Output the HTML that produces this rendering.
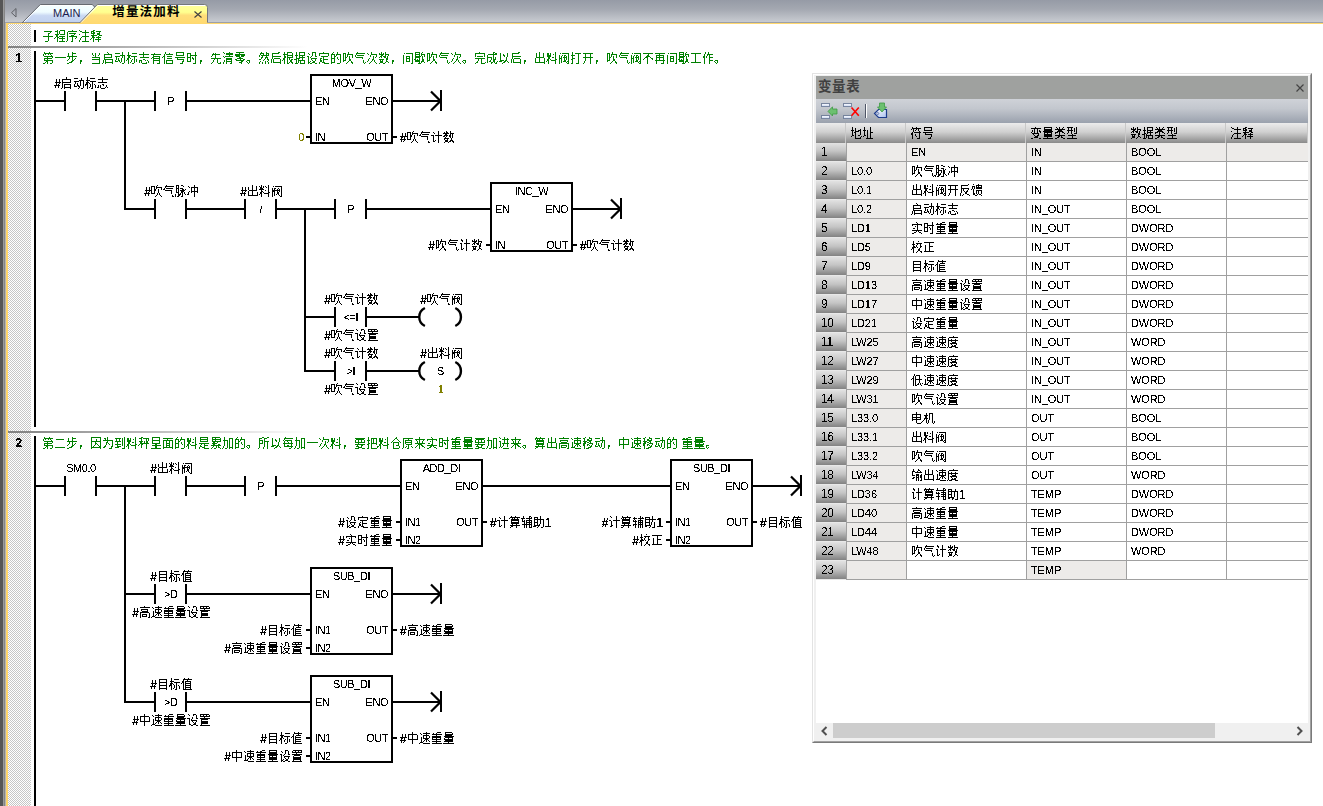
<!DOCTYPE html>
<html lang="zh-CN"><head><meta charset="utf-8"><title>增量法加料</title>
<style>
html,body{margin:0;padding:0;background:#fff;}
body{width:1323px;height:806px;overflow:hidden;position:relative;font-family:"Liberation Sans","Noto Sans CJK SC",sans-serif;font-size:12px;}
.abs{position:absolute;}
#strip{left:0;top:0;width:6px;height:806px;background:linear-gradient(90deg,#565656 0,#565656 3px,#9a9a9a 3px,#9a9a9a 4px,#858585 4px,#858585 5px,#b4b4b4 5px,#b4b4b4 6px);}
#tabbar{left:5px;top:0;width:1318px;height:23px;background:linear-gradient(180deg,#969ba6 0,#a4a8b1 40%,#c8cbd1 95%,#9da0a8 96%,#9da0a8 100%);}
#yl{left:6px;top:23px;width:1317px;height:1px;background:#ffd86e;}
#yv{left:6px;top:23px;width:2px;height:783px;background:#ffd66b;}
#gut{left:8px;top:24px;width:23px;height:782px;background-color:#fff;background-image:conic-gradient(#fff 25%,#c6c6c6 0 50%,#fff 0 75%,#c6c6c6 0);background-size:2px 2px;}
.sep{left:8px;height:2px;width:300px;background:linear-gradient(90deg,#808080 0,#ffffff 100%);}
svg text.c{font-family:"Liberation Sans","Noto Sans CJK SC",sans-serif;font-size:12px;font-weight:300;}
svg text.l{font-family:"Liberation Sans","Noto Sans CJK SC",sans-serif;font-size:11px;letter-spacing:-0.45px;}
svg text.nb{font-family:"Liberation Sans","Noto Sans CJK SC",sans-serif;font-size:12px;font-weight:bold;}
svg rect{shape-rendering:crispEdges;}
/* tabs */
#tabs{left:0;top:0;}
.tabtxt{position:absolute;white-space:nowrap;}
/* panel */
#panel{left:812px;top:73px;width:500px;height:670px;background:#f0f0f0;box-sizing:border-box;border-style:solid;border-width:1px;border-color:#e3e3e3 #7a7a7a #7a7a7a #e3e3e3;}
#panel .in{position:absolute;left:0;top:0;width:496px;height:666px;border-style:solid;border-width:1px;border-color:#fff #a0a0a0 #a0a0a0 #fff;}
#pc{left:816px;top:76px;width:492px;height:662px;background:#fff;overflow:hidden;}
#ttl{left:0;top:0;width:492px;height:23px;background:#9fa19f;}
#ttl span{position:absolute;left:2px;top:3px;font-weight:bold;font-size:13.5px;letter-spacing:0.6px;color:#404040;line-height:16px;}
#tool{left:0;top:23px;width:492px;height:24px;background:linear-gradient(180deg,#cfd2d8 0,#c3c7ce 40%,#9aa1ad 100%);}
.th{position:absolute;top:47px;height:20px;box-sizing:border-box;background:linear-gradient(180deg,#ececec 0,#d0d0d0 45%,#8a8a8a 100%);border-right:1px solid #c8c8c8;}

.rh{position:absolute;left:0;width:30px;height:18px;background:linear-gradient(180deg,#e2e2e2 0,#c4c4c4 45%,#828282 100%);border-bottom:1px solid #e8e8e8;}

.td{position:absolute;height:19px;box-sizing:border-box;background:#fff;border-left:1px solid #a0a0a0;border-bottom:1px solid #a0a0a0;}
.td.g{background:#edebe9;}
.td.last{border-right:0;}
.tx{position:absolute;left:0;top:0;width:492px;height:640px;}
.tx span{position:absolute;white-space:nowrap;color:#000;line-height:16px;}
.tx span.z{font-size:12px;font-weight:300;}
.tx span.a{font-size:11px;letter-spacing:-0.1px;}
.tx span.n{font-size:12px;letter-spacing:-0.4px;line-height:15px;}
#fz{filter:url(#th3);}
#fl{filter:url(#th4);}
#sb{left:0;top:647px;width:492px;height:15px;background:#f0f0f0;}
#thumb{left:17px;top:0;width:382px;height:15px;background:#cdcdcd;}
</style></head><body>
<div id="strip" class="abs"></div>
<div id="tabbar" class="abs"></div>
<div id="yl" class="abs"></div>
<div id="yv" class="abs"></div>
<div id="gut" class="abs"></div>
<div class="abs sep" style="top:46px"></div>
<div class="abs sep" style="top:431px"></div>
<svg class="abs" style="left:0;top:0" width="260" height="26" viewBox="0 0 260 26">
<defs>
<linearGradient id="gm" x1="0" y1="0" x2="0" y2="1"><stop offset="0" stop-color="#f6ffff"/><stop offset="0.42" stop-color="#effcff"/><stop offset="0.62" stop-color="#c9d8f3"/><stop offset="1" stop-color="#c2d2ef"/></linearGradient>
<linearGradient id="ga" x1="0" y1="0" x2="0" y2="1"><stop offset="0" stop-color="#ffff9e"/><stop offset="0.40" stop-color="#ffff8e"/><stop offset="0.55" stop-color="#ffde7a"/><stop offset="1" stop-color="#ffd96f"/></linearGradient>
</defs>
<path d="M22.5 22.5 L40.5 4.5 L92 4.5 L95.5 8 L81 22.5 Z" fill="url(#gm)"/>
<path d="M23.5 22.5 L41 5.5 L91.5 5.5" fill="none" stroke="#fff" stroke-width="1"/>
<path d="M22 23 L40.3 4.5 L92.2 4.5 L95 7.3" fill="none" stroke="#666a70" stroke-width="1"/>
<rect x="23" y="22" width="57" height="1" fill="#8b8e95"/>
<path d="M79 24 L97.3 4.5 L204.5 4.5 Q207.5 4.5 207.5 7.5 L207.5 24 Z" fill="url(#ga)"/>
<path d="M81 22.5 L98 5.5 L206 5.5" fill="none" stroke="#fff" stroke-width="1"/>
<path d="M79.5 23 L97.3 4.5 L204.5 4.5 Q207.5 4.5 207.5 7.5 L207.5 22.5" fill="none" stroke="#74777d" stroke-width="1"/>
<path d="M16 8.5 L11.5 12.7 L16 17 Z" fill="none" stroke="#5f6166" stroke-width="1"/>
<path d="M194.5 11.5 L201.5 17.5 M201.5 11.5 L194.5 17.5" fill="none" stroke="#404040" stroke-width="1.15"/>
<text x="53" y="17" style="font-family:'Liberation Sans','Noto Sans CJK SC',sans-serif;font-size:11px" fill="#1c1c4e">MAIN</text>
<text x="112.3" y="16.4" style="font-family:'Liberation Sans','Noto Sans CJK SC',sans-serif;font-size:12.5px;font-weight:bold;letter-spacing:1.15px" fill="#000">增量法加料</text>
</svg>
<svg class="abs" style="left:0;top:0" width="1323" height="806" viewBox="0 0 1323 806">
<defs>
<filter id="th3" x="0" y="0" width="100%" height="100%" color-interpolation-filters="sRGB"><feComponentTransfer><feFuncA type="discrete" tableValues="0 0 0 1 1 1 1 1 1 1"/></feComponentTransfer></filter>
<filter id="th4" x="0" y="0" width="100%" height="100%" color-interpolation-filters="sRGB"><feComponentTransfer><feFuncA type="discrete" tableValues="0 0 0 0 0 0 0 0 0 1 1 1 1 1 1 1 1 1 1 1"/></feComponentTransfer></filter>
</defs>
<g>
<rect x="34" y="30" width="2" height="12" fill="#000"/>
<rect x="34" y="51" width="2" height="376" fill="#000"/>
<rect x="34" y="436" width="2" height="370" fill="#000"/>
<rect x="36" y="100" width="28" height="2" fill="#000"/>
<rect x="64" y="91" width="2" height="20" fill="#000"/>
<rect x="95" y="91" width="2" height="20" fill="#000"/>
<rect x="97" y="100" width="57" height="2" fill="#000"/>
<rect x="154" y="91" width="2" height="20" fill="#000"/>
<rect x="185" y="91" width="2" height="20" fill="#000"/>
<rect x="187" y="100" width="123" height="2" fill="#000"/>
<rect x="311" y="75" width="81" height="68" fill="#fff" stroke="#000" stroke-width="2"/>
<rect x="306" y="136" width="4" height="2" fill="#000"/>
<rect x="393" y="136" width="4" height="2" fill="#000"/>
<rect x="393" y="100" width="47" height="2" fill="#000"/>
<rect x="440" y="90" width="2" height="21" fill="#000"/>
<path d="M431 91.5 L440.5 101 L431 110.5" fill="none" stroke="#000" stroke-width="2.2" class="aa"/>
<rect x="124" y="100" width="2" height="110" fill="#000"/>
<rect x="124" y="208" width="30" height="2" fill="#000"/>
<rect x="154" y="199" width="2" height="20" fill="#000"/>
<rect x="185" y="199" width="2" height="20" fill="#000"/>
<rect x="187" y="208" width="57" height="2" fill="#000"/>
<rect x="244" y="199" width="2" height="20" fill="#000"/>
<rect x="275" y="199" width="2" height="20" fill="#000"/>
<rect x="277" y="208" width="57" height="2" fill="#000"/>
<rect x="334" y="199" width="2" height="20" fill="#000"/>
<rect x="365" y="199" width="2" height="20" fill="#000"/>
<rect x="367" y="208" width="123" height="2" fill="#000"/>
<rect x="491" y="183" width="81" height="68" fill="#fff" stroke="#000" stroke-width="2"/>
<rect x="486" y="244" width="4" height="2" fill="#000"/>
<rect x="573" y="244" width="4" height="2" fill="#000"/>
<rect x="573" y="208" width="47" height="2" fill="#000"/>
<rect x="620" y="198" width="2" height="21" fill="#000"/>
<path d="M611 199.5 L620.5 209 L611 218.5" fill="none" stroke="#000" stroke-width="2.2" class="aa"/>
<rect x="304" y="208" width="2" height="164" fill="#000"/>
<rect x="304" y="316" width="30" height="2" fill="#000"/>
<rect x="334" y="307" width="2" height="20" fill="#000"/>
<rect x="365" y="307" width="2" height="20" fill="#000"/>
<rect x="367" y="316" width="52" height="2" fill="#000"/>
<path d="M424.9 308 A10 10 0 0 0 424.9 326" fill="none" stroke="#000" stroke-width="2.4" class="aa"/>
<path d="M455.3 308 A10 10 0 0 1 455.3 326" fill="none" stroke="#000" stroke-width="2.4" class="aa"/>
<rect x="304" y="370" width="30" height="2" fill="#000"/>
<rect x="334" y="361" width="2" height="20" fill="#000"/>
<rect x="365" y="361" width="2" height="20" fill="#000"/>
<rect x="367" y="370" width="52" height="2" fill="#000"/>
<path d="M424.9 362 A10 10 0 0 0 424.9 380" fill="none" stroke="#000" stroke-width="2.4" class="aa"/>
<path d="M455.3 362 A10 10 0 0 1 455.3 380" fill="none" stroke="#000" stroke-width="2.4" class="aa"/>
<rect x="36" y="485" width="28" height="2" fill="#000"/>
<rect x="64" y="476" width="2" height="20" fill="#000"/>
<rect x="95" y="476" width="2" height="20" fill="#000"/>
<rect x="97" y="485" width="57" height="2" fill="#000"/>
<rect x="154" y="476" width="2" height="20" fill="#000"/>
<rect x="185" y="476" width="2" height="20" fill="#000"/>
<rect x="187" y="485" width="57" height="2" fill="#000"/>
<rect x="244" y="476" width="2" height="20" fill="#000"/>
<rect x="275" y="476" width="2" height="20" fill="#000"/>
<rect x="277" y="485" width="123" height="2" fill="#000"/>
<rect x="401" y="460" width="81" height="86" fill="#fff" stroke="#000" stroke-width="2"/>
<rect x="396" y="521" width="4" height="2" fill="#000"/>
<rect x="396" y="539" width="4" height="2" fill="#000"/>
<rect x="483" y="521" width="4" height="2" fill="#000"/>
<rect x="483" y="485" width="187" height="2" fill="#000"/>
<rect x="671" y="460" width="81" height="86" fill="#fff" stroke="#000" stroke-width="2"/>
<rect x="666" y="521" width="4" height="2" fill="#000"/>
<rect x="666" y="539" width="4" height="2" fill="#000"/>
<rect x="753" y="521" width="4" height="2" fill="#000"/>
<rect x="753" y="485" width="47" height="2" fill="#000"/>
<rect x="800" y="475" width="2" height="21" fill="#000"/>
<path d="M791 476.5 L800.5 486 L791 495.5" fill="none" stroke="#000" stroke-width="2.2" class="aa"/>
<rect x="124" y="485" width="2" height="218" fill="#000"/>
<rect x="124" y="593" width="30" height="2" fill="#000"/>
<rect x="154" y="584" width="2" height="20" fill="#000"/>
<rect x="185" y="584" width="2" height="20" fill="#000"/>
<rect x="187" y="593" width="123" height="2" fill="#000"/>
<rect x="311" y="568" width="81" height="86" fill="#fff" stroke="#000" stroke-width="2"/>
<rect x="306" y="629" width="4" height="2" fill="#000"/>
<rect x="306" y="647" width="4" height="2" fill="#000"/>
<rect x="393" y="629" width="4" height="2" fill="#000"/>
<rect x="393" y="593" width="47" height="2" fill="#000"/>
<rect x="440" y="583" width="2" height="21" fill="#000"/>
<path d="M431 584.5 L440.5 594 L431 603.5" fill="none" stroke="#000" stroke-width="2.2" class="aa"/>
<rect x="124" y="701" width="30" height="2" fill="#000"/>
<rect x="154" y="692" width="2" height="20" fill="#000"/>
<rect x="185" y="692" width="2" height="20" fill="#000"/>
<rect x="187" y="701" width="123" height="2" fill="#000"/>
<rect x="311" y="676" width="81" height="86" fill="#fff" stroke="#000" stroke-width="2"/>
<rect x="306" y="737" width="4" height="2" fill="#000"/>
<rect x="306" y="755" width="4" height="2" fill="#000"/>
<rect x="393" y="737" width="4" height="2" fill="#000"/>
<rect x="393" y="701" width="47" height="2" fill="#000"/>
<rect x="440" y="691" width="2" height="21" fill="#000"/>
<path d="M431 692.5 L440.5 702 L431 711.5" fill="none" stroke="#000" stroke-width="2.2" class="aa"/>
</g>
<g filter="url(#th3)">
<text class="c" x="81.5" y="88.2" text-anchor="middle" fill="#000">#启动标志</text>
<text class="c" x="400" y="142.2" text-anchor="start" fill="#000">#吹气计数</text>
<text class="c" x="171.5" y="196.2" text-anchor="middle" fill="#000">#吹气脉冲</text>
<text class="c" x="261.5" y="196.2" text-anchor="middle" fill="#000">#出料阀</text>
<text class="c" x="483" y="250.2" text-anchor="end" fill="#000">#吹气计数</text>
<text class="c" x="580" y="250.2" text-anchor="start" fill="#000">#吹气计数</text>
<text class="c" x="351.5" y="304.2" text-anchor="middle" fill="#000">#吹气计数</text>
<text class="c" x="351.5" y="340.2" text-anchor="middle" fill="#000">#吹气设置</text>
<text class="c" x="441.5" y="304.2" text-anchor="middle" fill="#000">#吹气阀</text>
<text class="c" x="351.5" y="358.2" text-anchor="middle" fill="#000">#吹气计数</text>
<text class="c" x="351.5" y="394.2" text-anchor="middle" fill="#000">#吹气设置</text>
<text class="c" x="441.5" y="358.2" text-anchor="middle" fill="#000">#出料阀</text>
<text class="c" x="171.5" y="473.2" text-anchor="middle" fill="#000">#出料阀</text>
<text class="c" x="393" y="527.2" text-anchor="end" fill="#000">#设定重量</text>
<text class="c" x="393" y="545.2" text-anchor="end" fill="#000">#实时重量</text>
<text class="c" x="490" y="527.2" text-anchor="start" fill="#000">#计算辅助1</text>
<text class="c" x="663" y="527.2" text-anchor="end" fill="#000">#计算辅助1</text>
<text class="c" x="663" y="545.2" text-anchor="end" fill="#000">#校正</text>
<text class="c" x="760" y="527.2" text-anchor="start" fill="#000">#目标值</text>
<text class="c" x="171.5" y="581.2" text-anchor="middle" fill="#000">#目标值</text>
<text class="c" x="171.5" y="617.2" text-anchor="middle" fill="#000">#高速重量设置</text>
<text class="c" x="303" y="635.2" text-anchor="end" fill="#000">#目标值</text>
<text class="c" x="303" y="653.2" text-anchor="end" fill="#000">#高速重量设置</text>
<text class="c" x="400" y="635.2" text-anchor="start" fill="#000">#高速重量</text>
<text class="c" x="171.5" y="689.2" text-anchor="middle" fill="#000">#目标值</text>
<text class="c" x="171.5" y="725.2" text-anchor="middle" fill="#000">#中速重量设置</text>
<text class="c" x="303" y="743.2" text-anchor="end" fill="#000">#目标值</text>
<text class="c" x="303" y="761.2" text-anchor="end" fill="#000">#中速重量设置</text>
<text class="c" x="400" y="743.2" text-anchor="start" fill="#000">#中速重量</text>
<text class="c" x="42" y="41.2" text-anchor="start" fill="#008000">子程序注释</text>
<text class="c" x="42" y="63.2" text-anchor="start" fill="#008000">第一步，当启动标志有信号时，先清零。然后根据设定的吹气次数，间歇吹气次。完成以后，出料阀打开，吹气阀不再间歇工作。</text>
<text class="c" x="42" y="448.2" text-anchor="start" fill="#008000">第二步，因为到料秤里面的料是累加的。所以每加一次料，要把料仓原来实时重量要加进来。算出高速移动，中速移动的 重量。</text>
</g>
<g filter="url(#th4)">
<text class="l" x="170.8" y="105" text-anchor="middle" fill="#000">P</text>
<text class="l" x="351.5" y="87" text-anchor="middle" fill="#000">MOV_W</text>
<text class="l" x="315" y="105" text-anchor="start" fill="#000">EN</text>
<text class="l" x="388" y="105" text-anchor="end" fill="#000">ENO</text>
<text class="l" x="315" y="141" text-anchor="start" fill="#000">IN</text>
<text class="l" x="304" y="141" text-anchor="end" fill="#808000">0</text>
<text class="l" x="388" y="141" text-anchor="end" fill="#000">OUT</text>
<text class="l" x="260.8" y="213" text-anchor="middle" fill="#000">/</text>
<text class="l" x="350.8" y="213" text-anchor="middle" fill="#000">P</text>
<text class="l" x="531.5" y="195" text-anchor="middle" fill="#000">INC_W</text>
<text class="l" x="495" y="213" text-anchor="start" fill="#000">EN</text>
<text class="l" x="568" y="213" text-anchor="end" fill="#000">ENO</text>
<text class="l" x="495" y="249" text-anchor="start" fill="#000">IN</text>
<text class="l" x="568" y="249" text-anchor="end" fill="#000">OUT</text>
<text class="l" x="350.8" y="321" text-anchor="middle" fill="#000">&lt;=I</text>
<text class="l" x="350.8" y="375" text-anchor="middle" fill="#000">&gt;I</text>
<text class="l" x="440.5" y="375" text-anchor="middle" fill="#000">S</text>
<text class="l" x="440.5" y="393" text-anchor="middle" fill="#808000">1</text>
<text class="l" x="81.0" y="472" text-anchor="middle" fill="#000">SM0.0</text>
<text class="l" x="260.8" y="490" text-anchor="middle" fill="#000">P</text>
<text class="l" x="441.5" y="472" text-anchor="middle" fill="#000">ADD_DI</text>
<text class="l" x="405" y="490" text-anchor="start" fill="#000">EN</text>
<text class="l" x="478" y="490" text-anchor="end" fill="#000">ENO</text>
<text class="l" x="405" y="526" text-anchor="start" fill="#000">IN1</text>
<text class="l" x="405" y="544" text-anchor="start" fill="#000">IN2</text>
<text class="l" x="478" y="526" text-anchor="end" fill="#000">OUT</text>
<text class="l" x="711.5" y="472" text-anchor="middle" fill="#000">SUB_DI</text>
<text class="l" x="675" y="490" text-anchor="start" fill="#000">EN</text>
<text class="l" x="748" y="490" text-anchor="end" fill="#000">ENO</text>
<text class="l" x="675" y="526" text-anchor="start" fill="#000">IN1</text>
<text class="l" x="675" y="544" text-anchor="start" fill="#000">IN2</text>
<text class="l" x="748" y="526" text-anchor="end" fill="#000">OUT</text>
<text class="l" x="170.8" y="598" text-anchor="middle" fill="#000">&gt;D</text>
<text class="l" x="351.5" y="580" text-anchor="middle" fill="#000">SUB_DI</text>
<text class="l" x="315" y="598" text-anchor="start" fill="#000">EN</text>
<text class="l" x="388" y="598" text-anchor="end" fill="#000">ENO</text>
<text class="l" x="315" y="634" text-anchor="start" fill="#000">IN1</text>
<text class="l" x="315" y="652" text-anchor="start" fill="#000">IN2</text>
<text class="l" x="388" y="634" text-anchor="end" fill="#000">OUT</text>
<text class="l" x="170.8" y="706" text-anchor="middle" fill="#000">&gt;D</text>
<text class="l" x="351.5" y="688" text-anchor="middle" fill="#000">SUB_DI</text>
<text class="l" x="315" y="706" text-anchor="start" fill="#000">EN</text>
<text class="l" x="388" y="706" text-anchor="end" fill="#000">ENO</text>
<text class="l" x="315" y="742" text-anchor="start" fill="#000">IN1</text>
<text class="l" x="315" y="760" text-anchor="start" fill="#000">IN2</text>
<text class="l" x="388" y="742" text-anchor="end" fill="#000">OUT</text>
<text class="nb" x="15.5" y="62">1</text>
<text class="nb" x="15.5" y="447">2</text>
</g>
</svg>
<div id="panel" class="abs"><div class="in"></div></div>
<div id="pc" class="abs">
<div id="ttl" class="abs"><span>变量表</span>
<svg class="abs" style="left:479px;top:7px" width="10" height="10" viewBox="0 0 10 10"><path d="M1.5 1.5 L8.5 8.5 M8.5 1.5 L1.5 8.5" stroke="#444" stroke-width="1.2" fill="none"/></svg>
</div>
<div id="tool" class="abs"><svg class="abs" style="left:0;top:0" width="120" height="25" viewBox="816 99 120 25">
<defs>
<linearGradient id="gb" x1="0" y1="0" x2="0" y2="1"><stop offset="0" stop-color="#ffffff"/><stop offset="1" stop-color="#c9d6f2"/></linearGradient>
<linearGradient id="gt" x1="0" y1="0" x2="1" y2="1"><stop offset="0" stop-color="#ffffff"/><stop offset="1" stop-color="#a9c0ee"/></linearGradient>
</defs>
<g stroke="#6f7d99" stroke-width="0.9" fill="url(#gb)">
<rect x="821.5" y="103.5" width="8" height="3"/><rect x="821.5" y="115.5" width="8" height="3"/>
<rect x="843.5" y="103.5" width="8" height="3"/><rect x="843.5" y="115.5" width="8" height="3"/>
</g>
<path d="M828 111.4 L832.5 106.8 L832.5 109 L837 109 L837 114 L832.5 114 L832.5 116 Z" fill="#6cc070" stroke="#3f9a45" stroke-width="0.8"/>
<path d="M851.5 107.5 L858.8 115.8 M858.8 107.5 L851.5 115.8" stroke="#ff0000" stroke-width="1.6" fill="none"/>
<rect x="865" y="104" width="1" height="14" fill="#4e5566"/><rect x="866" y="104" width="1" height="14" fill="#ffffff"/>
<path d="M874.5 113.5 L878.5 109.5 L886.5 109.5 L886.5 117.5 L878.5 117.5 Z" fill="url(#gt)" stroke="#1d3c8c" stroke-width="1.2"/>
<circle cx="877.8" cy="113.5" r="1" fill="#fff" stroke="#1d3c8c" stroke-width="0.6"/>
<path d="M879.5 103 L884.5 103 L884.5 107 L886.5 107 L882 112 L877.5 107 L879.5 107 Z" fill="#6cc070" stroke="#3f9a45" stroke-width="0.8"/>
</svg></div>
<div class="th" style="left:0;width:30px"></div>
<div class="th" style="left:30px;width:60px"></div>
<div class="th" style="left:90px;width:120px"></div>
<div class="th" style="left:210px;width:100px"></div>
<div class="th" style="left:310px;width:100px"></div>
<div class="th" style="left:410px;width:82px"></div>
<div class="rh" style="top:67px"></div>
<div class="td g" style="top:67px;left:30px;width:60px"></div>
<div class="td g" style="top:67px;left:90px;width:120px"></div>
<div class="td g" style="top:67px;left:210px;width:100px"></div>
<div class="td g" style="top:67px;left:310px;width:100px"></div>
<div class="td g" style="top:67px;left:410px;width:82px"></div>
<div class="rh" style="top:86px"></div>
<div class="td g" style="top:86px;left:30px;width:60px"></div>
<div class="td" style="top:86px;left:90px;width:120px"></div>
<div class="td" style="top:86px;left:210px;width:100px"></div>
<div class="td" style="top:86px;left:310px;width:100px"></div>
<div class="td" style="top:86px;left:410px;width:82px"></div>
<div class="rh" style="top:105px"></div>
<div class="td g" style="top:105px;left:30px;width:60px"></div>
<div class="td" style="top:105px;left:90px;width:120px"></div>
<div class="td" style="top:105px;left:210px;width:100px"></div>
<div class="td" style="top:105px;left:310px;width:100px"></div>
<div class="td" style="top:105px;left:410px;width:82px"></div>
<div class="rh" style="top:124px"></div>
<div class="td g" style="top:124px;left:30px;width:60px"></div>
<div class="td" style="top:124px;left:90px;width:120px"></div>
<div class="td" style="top:124px;left:210px;width:100px"></div>
<div class="td" style="top:124px;left:310px;width:100px"></div>
<div class="td" style="top:124px;left:410px;width:82px"></div>
<div class="rh" style="top:143px"></div>
<div class="td g" style="top:143px;left:30px;width:60px"></div>
<div class="td" style="top:143px;left:90px;width:120px"></div>
<div class="td" style="top:143px;left:210px;width:100px"></div>
<div class="td" style="top:143px;left:310px;width:100px"></div>
<div class="td" style="top:143px;left:410px;width:82px"></div>
<div class="rh" style="top:162px"></div>
<div class="td g" style="top:162px;left:30px;width:60px"></div>
<div class="td" style="top:162px;left:90px;width:120px"></div>
<div class="td" style="top:162px;left:210px;width:100px"></div>
<div class="td" style="top:162px;left:310px;width:100px"></div>
<div class="td" style="top:162px;left:410px;width:82px"></div>
<div class="rh" style="top:181px"></div>
<div class="td g" style="top:181px;left:30px;width:60px"></div>
<div class="td" style="top:181px;left:90px;width:120px"></div>
<div class="td" style="top:181px;left:210px;width:100px"></div>
<div class="td" style="top:181px;left:310px;width:100px"></div>
<div class="td" style="top:181px;left:410px;width:82px"></div>
<div class="rh" style="top:200px"></div>
<div class="td g" style="top:200px;left:30px;width:60px"></div>
<div class="td" style="top:200px;left:90px;width:120px"></div>
<div class="td" style="top:200px;left:210px;width:100px"></div>
<div class="td" style="top:200px;left:310px;width:100px"></div>
<div class="td" style="top:200px;left:410px;width:82px"></div>
<div class="rh" style="top:219px"></div>
<div class="td g" style="top:219px;left:30px;width:60px"></div>
<div class="td" style="top:219px;left:90px;width:120px"></div>
<div class="td" style="top:219px;left:210px;width:100px"></div>
<div class="td" style="top:219px;left:310px;width:100px"></div>
<div class="td" style="top:219px;left:410px;width:82px"></div>
<div class="rh" style="top:238px"></div>
<div class="td g" style="top:238px;left:30px;width:60px"></div>
<div class="td" style="top:238px;left:90px;width:120px"></div>
<div class="td" style="top:238px;left:210px;width:100px"></div>
<div class="td" style="top:238px;left:310px;width:100px"></div>
<div class="td" style="top:238px;left:410px;width:82px"></div>
<div class="rh" style="top:257px"></div>
<div class="td g" style="top:257px;left:30px;width:60px"></div>
<div class="td" style="top:257px;left:90px;width:120px"></div>
<div class="td" style="top:257px;left:210px;width:100px"></div>
<div class="td" style="top:257px;left:310px;width:100px"></div>
<div class="td" style="top:257px;left:410px;width:82px"></div>
<div class="rh" style="top:276px"></div>
<div class="td g" style="top:276px;left:30px;width:60px"></div>
<div class="td" style="top:276px;left:90px;width:120px"></div>
<div class="td" style="top:276px;left:210px;width:100px"></div>
<div class="td" style="top:276px;left:310px;width:100px"></div>
<div class="td" style="top:276px;left:410px;width:82px"></div>
<div class="rh" style="top:295px"></div>
<div class="td g" style="top:295px;left:30px;width:60px"></div>
<div class="td" style="top:295px;left:90px;width:120px"></div>
<div class="td" style="top:295px;left:210px;width:100px"></div>
<div class="td" style="top:295px;left:310px;width:100px"></div>
<div class="td" style="top:295px;left:410px;width:82px"></div>
<div class="rh" style="top:314px"></div>
<div class="td g" style="top:314px;left:30px;width:60px"></div>
<div class="td" style="top:314px;left:90px;width:120px"></div>
<div class="td" style="top:314px;left:210px;width:100px"></div>
<div class="td" style="top:314px;left:310px;width:100px"></div>
<div class="td" style="top:314px;left:410px;width:82px"></div>
<div class="rh" style="top:333px"></div>
<div class="td g" style="top:333px;left:30px;width:60px"></div>
<div class="td" style="top:333px;left:90px;width:120px"></div>
<div class="td" style="top:333px;left:210px;width:100px"></div>
<div class="td" style="top:333px;left:310px;width:100px"></div>
<div class="td" style="top:333px;left:410px;width:82px"></div>
<div class="rh" style="top:352px"></div>
<div class="td g" style="top:352px;left:30px;width:60px"></div>
<div class="td" style="top:352px;left:90px;width:120px"></div>
<div class="td" style="top:352px;left:210px;width:100px"></div>
<div class="td" style="top:352px;left:310px;width:100px"></div>
<div class="td" style="top:352px;left:410px;width:82px"></div>
<div class="rh" style="top:371px"></div>
<div class="td g" style="top:371px;left:30px;width:60px"></div>
<div class="td" style="top:371px;left:90px;width:120px"></div>
<div class="td" style="top:371px;left:210px;width:100px"></div>
<div class="td" style="top:371px;left:310px;width:100px"></div>
<div class="td" style="top:371px;left:410px;width:82px"></div>
<div class="rh" style="top:390px"></div>
<div class="td g" style="top:390px;left:30px;width:60px"></div>
<div class="td" style="top:390px;left:90px;width:120px"></div>
<div class="td" style="top:390px;left:210px;width:100px"></div>
<div class="td" style="top:390px;left:310px;width:100px"></div>
<div class="td" style="top:390px;left:410px;width:82px"></div>
<div class="rh" style="top:409px"></div>
<div class="td g" style="top:409px;left:30px;width:60px"></div>
<div class="td" style="top:409px;left:90px;width:120px"></div>
<div class="td" style="top:409px;left:210px;width:100px"></div>
<div class="td" style="top:409px;left:310px;width:100px"></div>
<div class="td" style="top:409px;left:410px;width:82px"></div>
<div class="rh" style="top:428px"></div>
<div class="td g" style="top:428px;left:30px;width:60px"></div>
<div class="td" style="top:428px;left:90px;width:120px"></div>
<div class="td" style="top:428px;left:210px;width:100px"></div>
<div class="td" style="top:428px;left:310px;width:100px"></div>
<div class="td" style="top:428px;left:410px;width:82px"></div>
<div class="rh" style="top:447px"></div>
<div class="td g" style="top:447px;left:30px;width:60px"></div>
<div class="td" style="top:447px;left:90px;width:120px"></div>
<div class="td" style="top:447px;left:210px;width:100px"></div>
<div class="td" style="top:447px;left:310px;width:100px"></div>
<div class="td" style="top:447px;left:410px;width:82px"></div>
<div class="rh" style="top:466px"></div>
<div class="td g" style="top:466px;left:30px;width:60px"></div>
<div class="td" style="top:466px;left:90px;width:120px"></div>
<div class="td" style="top:466px;left:210px;width:100px"></div>
<div class="td" style="top:466px;left:310px;width:100px"></div>
<div class="td" style="top:466px;left:410px;width:82px"></div>
<div class="rh" style="top:485px"></div>
<div class="td g" style="top:485px;left:30px;width:60px"></div>
<div class="td" style="top:485px;left:90px;width:120px"></div>
<div class="td g" style="top:485px;left:210px;width:100px"></div>
<div class="td" style="top:485px;left:310px;width:100px"></div>
<div class="td" style="top:485px;left:410px;width:82px"></div>
<div id="fz" class="tx"><span class="z" style="left:34px;top:49.7px">地址</span>
<span class="z" style="left:94px;top:49.7px">符号</span>
<span class="z" style="left:214px;top:49.7px">变量类型</span>
<span class="z" style="left:314px;top:49.7px">数据类型</span>
<span class="z" style="left:414px;top:49.7px">注释</span>
<span class="z" style="left:95px;top:87.5px">吹气脉冲</span>
<span class="z" style="left:95px;top:106.5px">出料阀开反馈</span>
<span class="z" style="left:95px;top:125.5px">启动标志</span>
<span class="z" style="left:95px;top:144.5px">实时重量</span>
<span class="z" style="left:95px;top:163.5px">校正</span>
<span class="z" style="left:95px;top:182.5px">目标值</span>
<span class="z" style="left:95px;top:201.5px">高速重量设置</span>
<span class="z" style="left:95px;top:220.5px">中速重量设置</span>
<span class="z" style="left:95px;top:239.5px">设定重量</span>
<span class="z" style="left:95px;top:258.5px">高速速度</span>
<span class="z" style="left:95px;top:277.5px">中速速度</span>
<span class="z" style="left:95px;top:296.5px">低速速度</span>
<span class="z" style="left:95px;top:315.5px">吹气设置</span>
<span class="z" style="left:95px;top:334.5px">电机</span>
<span class="z" style="left:95px;top:353.5px">出料阀</span>
<span class="z" style="left:95px;top:372.5px">吹气阀</span>
<span class="z" style="left:95px;top:391.5px">输出速度</span>
<span class="z" style="left:95px;top:410.5px">计算辅助1</span>
<span class="z" style="left:95px;top:429.5px">高速重量</span>
<span class="z" style="left:95px;top:448.5px">中速重量</span>
<span class="z" style="left:95px;top:467.5px">吹气计数</span></div>
<div id="fl" class="tx"><span class="n" style="left:5px;top:69px">1</span>
<span class="a" style="left:95px;top:67.8px">EN</span>
<span class="a" style="left:215px;top:67.8px">IN</span>
<span class="a" style="left:315px;top:67.8px">BOOL</span>
<span class="n" style="left:5px;top:88px">2</span>
<span class="a" style="left:35px;top:86.8px">L0.0</span>
<span class="a" style="left:215px;top:86.8px">IN</span>
<span class="a" style="left:315px;top:86.8px">BOOL</span>
<span class="n" style="left:5px;top:107px">3</span>
<span class="a" style="left:35px;top:105.8px">L0.1</span>
<span class="a" style="left:215px;top:105.8px">IN</span>
<span class="a" style="left:315px;top:105.8px">BOOL</span>
<span class="n" style="left:5px;top:126px">4</span>
<span class="a" style="left:35px;top:124.8px">L0.2</span>
<span class="a" style="left:215px;top:124.8px">IN_OUT</span>
<span class="a" style="left:315px;top:124.8px">BOOL</span>
<span class="n" style="left:5px;top:145px">5</span>
<span class="a" style="left:35px;top:143.8px">LD1</span>
<span class="a" style="left:215px;top:143.8px">IN_OUT</span>
<span class="a" style="left:315px;top:143.8px">DWORD</span>
<span class="n" style="left:5px;top:164px">6</span>
<span class="a" style="left:35px;top:162.8px">LD5</span>
<span class="a" style="left:215px;top:162.8px">IN_OUT</span>
<span class="a" style="left:315px;top:162.8px">DWORD</span>
<span class="n" style="left:5px;top:183px">7</span>
<span class="a" style="left:35px;top:181.8px">LD9</span>
<span class="a" style="left:215px;top:181.8px">IN_OUT</span>
<span class="a" style="left:315px;top:181.8px">DWORD</span>
<span class="n" style="left:5px;top:202px">8</span>
<span class="a" style="left:35px;top:200.8px">LD13</span>
<span class="a" style="left:215px;top:200.8px">IN_OUT</span>
<span class="a" style="left:315px;top:200.8px">DWORD</span>
<span class="n" style="left:5px;top:221px">9</span>
<span class="a" style="left:35px;top:219.8px">LD17</span>
<span class="a" style="left:215px;top:219.8px">IN_OUT</span>
<span class="a" style="left:315px;top:219.8px">DWORD</span>
<span class="n" style="left:5px;top:240px">10</span>
<span class="a" style="left:35px;top:238.8px">LD21</span>
<span class="a" style="left:215px;top:238.8px">IN_OUT</span>
<span class="a" style="left:315px;top:238.8px">DWORD</span>
<span class="n" style="left:5px;top:259px">11</span>
<span class="a" style="left:35px;top:257.8px">LW25</span>
<span class="a" style="left:215px;top:257.8px">IN_OUT</span>
<span class="a" style="left:315px;top:257.8px">WORD</span>
<span class="n" style="left:5px;top:278px">12</span>
<span class="a" style="left:35px;top:276.8px">LW27</span>
<span class="a" style="left:215px;top:276.8px">IN_OUT</span>
<span class="a" style="left:315px;top:276.8px">WORD</span>
<span class="n" style="left:5px;top:297px">13</span>
<span class="a" style="left:35px;top:295.8px">LW29</span>
<span class="a" style="left:215px;top:295.8px">IN_OUT</span>
<span class="a" style="left:315px;top:295.8px">WORD</span>
<span class="n" style="left:5px;top:316px">14</span>
<span class="a" style="left:35px;top:314.8px">LW31</span>
<span class="a" style="left:215px;top:314.8px">IN_OUT</span>
<span class="a" style="left:315px;top:314.8px">WORD</span>
<span class="n" style="left:5px;top:335px">15</span>
<span class="a" style="left:35px;top:333.8px">L33.0</span>
<span class="a" style="left:215px;top:333.8px">OUT</span>
<span class="a" style="left:315px;top:333.8px">BOOL</span>
<span class="n" style="left:5px;top:354px">16</span>
<span class="a" style="left:35px;top:352.8px">L33.1</span>
<span class="a" style="left:215px;top:352.8px">OUT</span>
<span class="a" style="left:315px;top:352.8px">BOOL</span>
<span class="n" style="left:5px;top:373px">17</span>
<span class="a" style="left:35px;top:371.8px">L33.2</span>
<span class="a" style="left:215px;top:371.8px">OUT</span>
<span class="a" style="left:315px;top:371.8px">BOOL</span>
<span class="n" style="left:5px;top:392px">18</span>
<span class="a" style="left:35px;top:390.8px">LW34</span>
<span class="a" style="left:215px;top:390.8px">OUT</span>
<span class="a" style="left:315px;top:390.8px">WORD</span>
<span class="n" style="left:5px;top:411px">19</span>
<span class="a" style="left:35px;top:409.8px">LD36</span>
<span class="a" style="left:215px;top:409.8px">TEMP</span>
<span class="a" style="left:315px;top:409.8px">DWORD</span>
<span class="n" style="left:5px;top:430px">20</span>
<span class="a" style="left:35px;top:428.8px">LD40</span>
<span class="a" style="left:215px;top:428.8px">TEMP</span>
<span class="a" style="left:315px;top:428.8px">DWORD</span>
<span class="n" style="left:5px;top:449px">21</span>
<span class="a" style="left:35px;top:447.8px">LD44</span>
<span class="a" style="left:215px;top:447.8px">TEMP</span>
<span class="a" style="left:315px;top:447.8px">DWORD</span>
<span class="n" style="left:5px;top:468px">22</span>
<span class="a" style="left:35px;top:466.8px">LW48</span>
<span class="a" style="left:215px;top:466.8px">TEMP</span>
<span class="a" style="left:315px;top:466.8px">WORD</span>
<span class="n" style="left:5px;top:487px">23</span>
<span class="a" style="left:215px;top:485.8px">TEMP</span></div>
<div id="sb" class="abs"><div id="thumb" class="abs"></div>
<svg class="abs" style="left:0;top:0" width="492" height="15" viewBox="0 0 492 15"><path d="M10.5 4 L6.5 8 L10.5 12" stroke="#505050" stroke-width="2" fill="none"/><path d="M481.5 4 L485.5 8 L481.5 12" stroke="#505050" stroke-width="2" fill="none"/></svg>
</div>
</div>
</body></html>
